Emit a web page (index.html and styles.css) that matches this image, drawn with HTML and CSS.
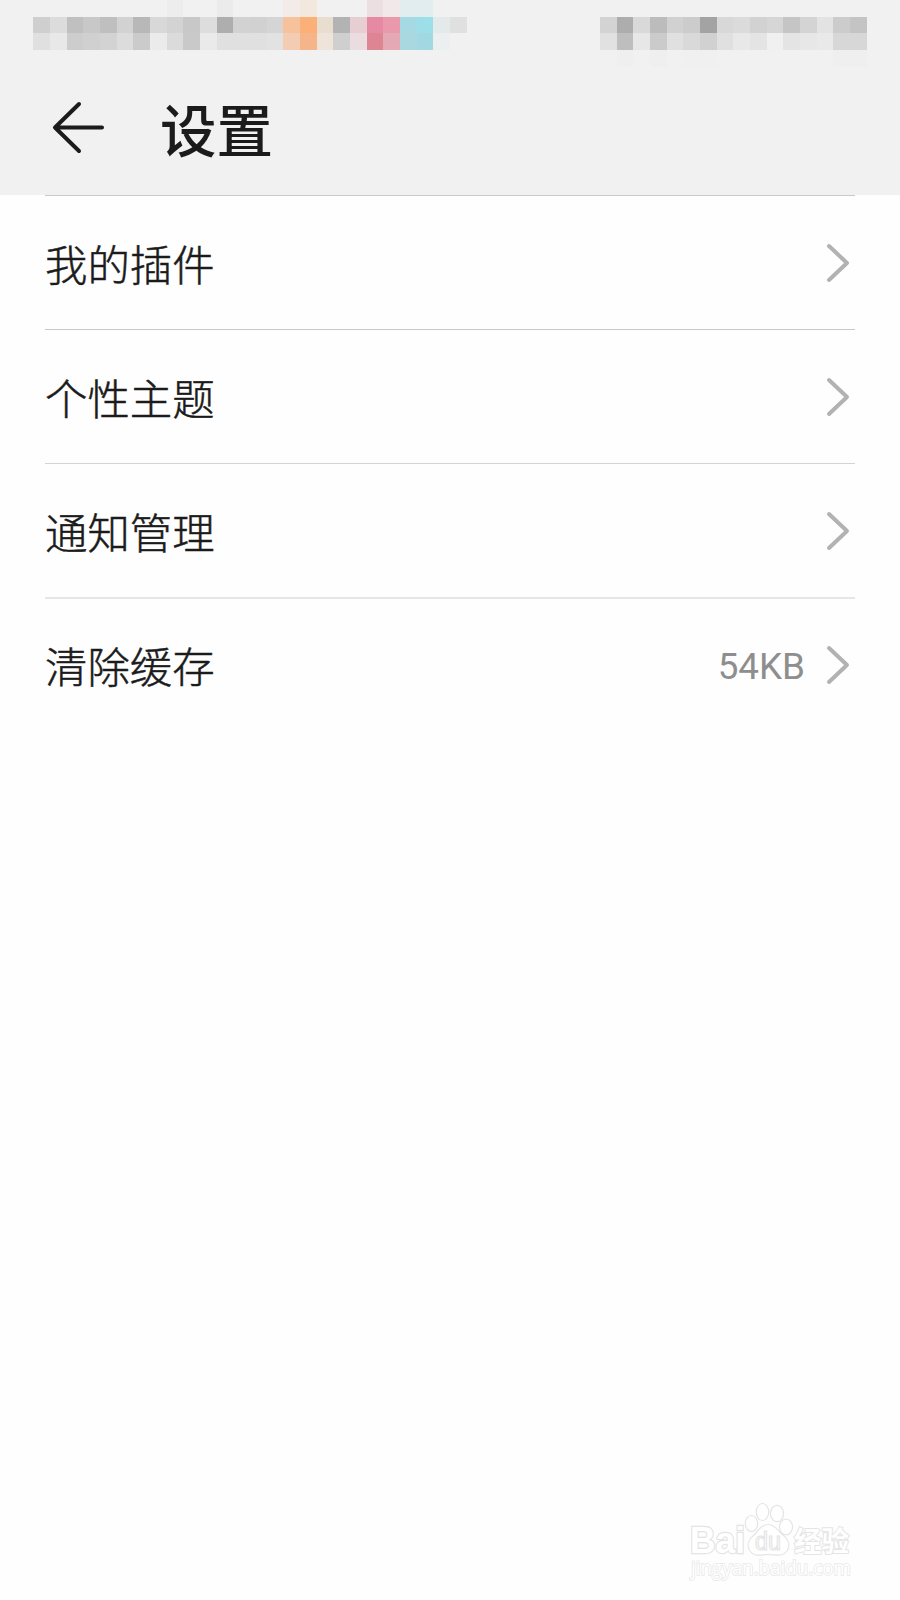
FILE: index.html
```html
<!DOCTYPE html>
<html lang="zh-CN">
<head>
<meta charset="utf-8">
<title>设置</title>
<link rel="stylesheet" href="styles.css">
</head>
<body>
<div class="screen">
  <header class="header">
    <svg class="status" viewBox="0 0 54 4" preserveAspectRatio="none" aria-hidden="true"></svg>
    <div class="title-bar">
      <svg class="back" viewBox="0 0 54 54"><path d="M29 4 5 27.500 29 51M5 27.500H52"/></svg>
      <h1 class="title">设置</h1>
    </div>
  </header>
  <main class="list">
    <div class="row"><span class="label">我的插件</span><svg class="chevron" viewBox="0 0 24 40"><path d="M3 3 21 20 3 37"/></svg></div>
    <div class="row"><span class="label">个性主题</span><svg class="chevron" viewBox="0 0 24 40"><path d="M3 3 21 20 3 37"/></svg></div>
    <div class="row row-soft"><span class="label">通知管理</span><svg class="chevron" viewBox="0 0 24 40"><path d="M3 3 21 20 3 37"/></svg></div>
    <div class="row row-faint"><span class="label">清除缓存</span><span class="value">54KB</span><svg class="chevron" viewBox="0 0 24 40"><path d="M3 3 21 20 3 37"/></svg></div>
  </main>
  <footer class="footer">
    <svg class="watermark" viewBox="0 0 200 110">
      <g class="outline">
        <text class="brand" x="20" y="62.500" textLength="55" lengthAdjust="spacingAndGlyphs">Bai</text>
        <ellipse cx="81.500" cy="33.500" rx="6.200" ry="8"/>
        <ellipse cx="92.500" cy="22" rx="6.200" ry="8.500"/>
        <ellipse cx="107" cy="23.500" rx="6.500" ry="8.200"/>
        <ellipse cx="116" cy="37" rx="6.500" ry="8"/>
        <path d="M98 34.500C90 34.500 88 42 84 45C79 49 76 55 80 61C84 67.500 91 64.500 98 64.500C105 64.500 112 67.500 117 61C121 55 118 49 113 45C108 42 106 34.500 98 34.500Z"/>
        <text class="du" x="85" y="60" textLength="26" lengthAdjust="spacingAndGlyphs">du</text>
        <text class="exp" x="124" y="61.500" textLength="55" lengthAdjust="spacingAndGlyphs">经验</text>
      </g>
      <text class="url" x="21" y="85" textLength="160" lengthAdjust="spacingAndGlyphs">jingyan.baidu.com</text>
    </svg>
  </footer>
</div>
<script src="script.js"></script>
</body>
</html>
```
FILE: styles.css
```css
body { margin: 0; background: #fefefe; }
.screen {
  display: flex;
  flex-direction: column;
  width: 900px;
  height: 1600px;
  background: #fefefe;
  color: #1b1b1b;
  font-family: "Noto Sans CJK SC", sans-serif;
}
.header { height: 195px; background: #f1f1f1; }
.status { display: block; width: 900px; height: 66.667px; }
.title-bar { display: flex; align-items: center; height: 121px; padding-left: 50px; }
.back { width: 54px; height: 54px; margin-right: 56px; }
.back path { fill: none; stroke: #1b1b1b; stroke-width: 4; stroke-linecap: round; stroke-linejoin: round; }
.title { margin: 0; font-size: 56.500px; line-height: 80px; font-weight: 500; }
.list { padding: 0 45px; }
.row {
  display: flex;
  align-items: center;
  box-sizing: border-box;
  height: 134.200px;
  padding-right: 5px;
  border-top: 1px solid #c8c8c8;
}
.row-soft { height: 133.600px; border-top-color: #d4d4d4; }
.row-faint { border-top: 2px solid #e6e6e6; }
.label {
  flex: 1;
  font-size: 42.400px;
  line-height: 60px;
  font-weight: 300;
  -webkit-text-stroke: 0.5px #1b1b1b;
}
.value { font-family: Roboto, sans-serif; font-size: 36.800px; line-height: 44px; color: #8e8e8e; margin-right: 21px; padding-top: 3px; }
.chevron { width: 24px; height: 40px; }
.chevron path { fill: none; stroke: #b2b2b2; stroke-width: 4; stroke-linecap: round; stroke-linejoin: round; }
.footer { display: flex; justify-content: flex-end; margin-top: auto; padding-right: 30px; }
.watermark { display: block; width: 200px; height: 110px; }
.outline { fill: #fff; stroke: #e4e4e4; stroke-width: 1.2; }
.brand { font: bold 37px "Liberation Sans", sans-serif; stroke-width: 2.4; paint-order: stroke; }
.du { font: 25px "Liberation Sans", sans-serif; }
.exp { font: bold 28px "Noto Sans CJK SC", sans-serif; stroke-width: 2; paint-order: stroke; }
.url { font: 20px "Open Sans", sans-serif; fill: #fff; stroke: #e8e8e8; stroke-width: 1.6; paint-order: stroke; }
```
FILE: script.js
```js
// Mosaic status bar: each run is [column, row, space-separated colours].
// Two-digit entries are grey levels.
const runs = [
  [10, 0, "ed"], [13, 0, "eb"],
  [17, 0, "f2ebe7 f2e8de"], [22, 0, "ecdfe2 f0e8e9 e2edef e2edef"],
  [2, 1, "cf dc c0 c8 bf d2 b8 d8 d3 c8 dd ae d2 d1 d5 f5c29c fab077 e9ddd0 b3 e6ced3 e68aa3 ea98ab a5d9e3 9cdfe9 e4e9ea e0"],
  [2, 2, "e0 e8 cd d0 d3 dc cb eb db c9 ea e0 e0 e0 e2 f3ccb3 f5b48a eee4da cf ebdce0 dd8593 e5a9b5 a9d8e1 a2d8e2 ebeff0"],
  [36, 1, "d3 ad d9 bc d1 cc a3 d8 db d2 d6 c5 d4 e3 cc c4"],
  [36, 2, "e1 be e7 cb e0 d9 d1 e0 e8 e4 f0 e4 e7 e9 d7 d7"],
  [37, 3, "ef"], [39, 3, "ef"], [41, 3, "f0 f0"], [50, 3, "ef ef"]
];
const bar = document.querySelector(".status");
bar.setAttribute("shape-rendering", "crispEdges");
for (const [col, row, colours] of runs) {
  colours.split(" ").forEach((c, i) => {
    const rect = document.createElementNS("http://www.w3.org/2000/svg", "rect");
    rect.setAttribute("x", col + i);
    rect.setAttribute("y", row);
    rect.setAttribute("width", 1);
    rect.setAttribute("height", 1);
    rect.setAttribute("fill", "#" + (c.length === 2 ? c.repeat(3) : c));
    bar.appendChild(rect);
  });
}
```
